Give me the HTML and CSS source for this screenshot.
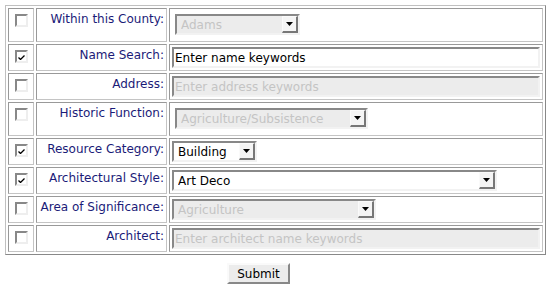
FILE: index.html
```html
<!DOCTYPE html>
<html>
<head>
<meta charset="utf-8">
<link rel="stylesheet" href="styles.css">
</head>
<body>
<form class="search">
<table class="grid">
  <tr class="tall">
    <td class="chk"><span class="cb"></span></td>
    <td class="lbl">Within this County:</td>
    <td class="fld"><span class="sel dis ind w-county"><span class="val">Adams</span><span class="arrow"><svg width="7" height="4" viewBox="0 0 7 4"><path d="M0 0H7L3.5 4Z"/></svg></span></span></td>
  </tr>
  <tr>
    <td class="chk"><span class="cb on"><svg width="7" height="5" viewBox="0 0 7 5"><path d="M0.5 2.5L2.5 4.5L6.5 0.5" fill="none" stroke="#000" stroke-width="1.3"/></svg></span></td>
    <td class="lbl">Name Search:</td>
    <td class="fld"><span class="txt">Enter name keywords</span></td>
  </tr>
  <tr>
    <td class="chk"><span class="cb"></span></td>
    <td class="lbl">Address:</td>
    <td class="fld"><span class="txt dis">Enter address keywords</span></td>
  </tr>
  <tr class="tall">
    <td class="chk"><span class="cb"></span></td>
    <td class="lbl">Historic Function:</td>
    <td class="fld"><span class="sel dis ind w-func"><span class="val">Agriculture/Subsistence</span><span class="arrow"><svg width="7" height="4" viewBox="0 0 7 4"><path d="M0 0H7L3.5 4Z"/></svg></span></span></td>
  </tr>
  <tr>
    <td class="chk"><span class="cb on"><svg width="7" height="5" viewBox="0 0 7 5"><path d="M0.5 2.5L2.5 4.5L6.5 0.5" fill="none" stroke="#000" stroke-width="1.3"/></svg></span></td>
    <td class="lbl">Resource Category:</td>
    <td class="fld"><span class="sel w-cat"><span class="val">Building</span><span class="arrow"><svg width="7" height="4" viewBox="0 0 7 4"><path d="M0 0H7L3.5 4Z"/></svg></span></span></td>
  </tr>
  <tr>
    <td class="chk"><span class="cb on"><svg width="7" height="5" viewBox="0 0 7 5"><path d="M0.5 2.5L2.5 4.5L6.5 0.5" fill="none" stroke="#000" stroke-width="1.3"/></svg></span></td>
    <td class="lbl">Architectural Style:</td>
    <td class="fld"><span class="sel w-style"><span class="val">Art Deco</span><span class="arrow"><svg width="7" height="4" viewBox="0 0 7 4"><path d="M0 0H7L3.5 4Z"/></svg></span></span></td>
  </tr>
  <tr>
    <td class="chk"><span class="cb"></span></td>
    <td class="lbl">Area of Significance:</td>
    <td class="fld"><span class="sel dis w-area"><span class="val">Agriculture</span><span class="arrow"><svg width="7" height="4" viewBox="0 0 7 4"><path d="M0 0H7L3.5 4Z"/></svg></span></span></td>
  </tr>
  <tr>
    <td class="chk"><span class="cb"></span></td>
    <td class="lbl">Architect:</td>
    <td class="fld"><span class="txt dis">Enter architect name keywords</span></td>
  </tr>
</table>
<div class="actions"><button type="button" class="submit">Submit</button></div>
</form>
</body>
</html>
```
FILE: styles.css
```css
html, body {
  margin: 0;
  padding: 0;
  background: #fff;
}
body {
  font-family: "DejaVu Sans", Verdana, sans-serif;
  font-size: 12px;
}
.search {
  padding: 5px 0 0 5px;
}
.grid {
  width: 541px;
  table-layout: fixed;
  border-collapse: separate;
  border-spacing: 2px;
  border: 1px solid;
  border-color: #c0c0c0 #888 #888 #c0c0c0;
}
.grid td {
  border: 1px solid;
  border-color: #999 #c4c4c4 #c4c4c4 #999;
  padding: 2px;
  vertical-align: top;
}
.chk {
  width: 20px;
}
.lbl {
  width: 125px;
  text-align: right;
  color: #1b1b78;
  line-height: 16px;
  padding-right: 1px;
}
.cb {
  display: flex;
  align-items: center;
  justify-content: center;
  box-sizing: border-box;
  width: 13px;
  height: 13px;
  margin: 3px 0 0 4px;
  border: 2px solid;
  border-color: #888 #eee #eee #888;
  background: #fff;
}
.cb svg {
  display: block;
  margin: 1px 1px 0 0;
}
.txt {
  display: flex;
  align-items: center;
  box-sizing: border-box;
  width: 100%;
  height: 21px;
  padding-left: 1px;
  border: 2px solid;
  border-color: #888 #f2f2f2 #f2f2f2 #888;
  background: #fff;
  color: #000;
  font-size: 12px;
  white-space: nowrap;
}
.txt.dis {
  background: #ececec;
  color: #c4c4c4;
}
.sel {
  display: flex;
  align-items: center;
  box-sizing: border-box;
  height: 21px;
  padding-left: 4px;
  border: 2px solid;
  border-color: #888 #f2f2f2 #f2f2f2 #888;
  background: #fff;
  color: #000;
  white-space: nowrap;
}
.sel.dis {
  background: #ececec;
  color: #c4c4c4;
}
.sel.ind {
  margin: 3px 3px 4px;
}
.val {
  flex: 1;
  overflow: hidden;
}
.arrow {
  display: flex;
  align-items: center;
  justify-content: center;
  box-sizing: border-box;
  width: 16px;
  height: 17px;
  border: 1px solid;
  border-color: #fafafa #777 #777 #fafafa;
  border-right-width: 2px;
  border-bottom-width: 2px;
  background: #f4f4f4;
}
.arrow svg {
  display: block;
}
.w-county { width: 125px; }
.w-func { width: 193px; }
.w-cat { width: 85px; }
.w-style { width: 325px; }
.w-area { width: 204px; }
.actions {
  padding: 8px 0 0 222px;
}
.submit {
  display: block;
  box-sizing: border-box;
  width: 63px;
  height: 21px;
  padding: 0;
  font-family: "DejaVu Sans", Verdana, sans-serif;
  font-size: 12px;
  color: #000;
  background: #ececec;
  border: 2px solid;
  border-color: #fafafa #888 #888 #fafafa;
}
```
